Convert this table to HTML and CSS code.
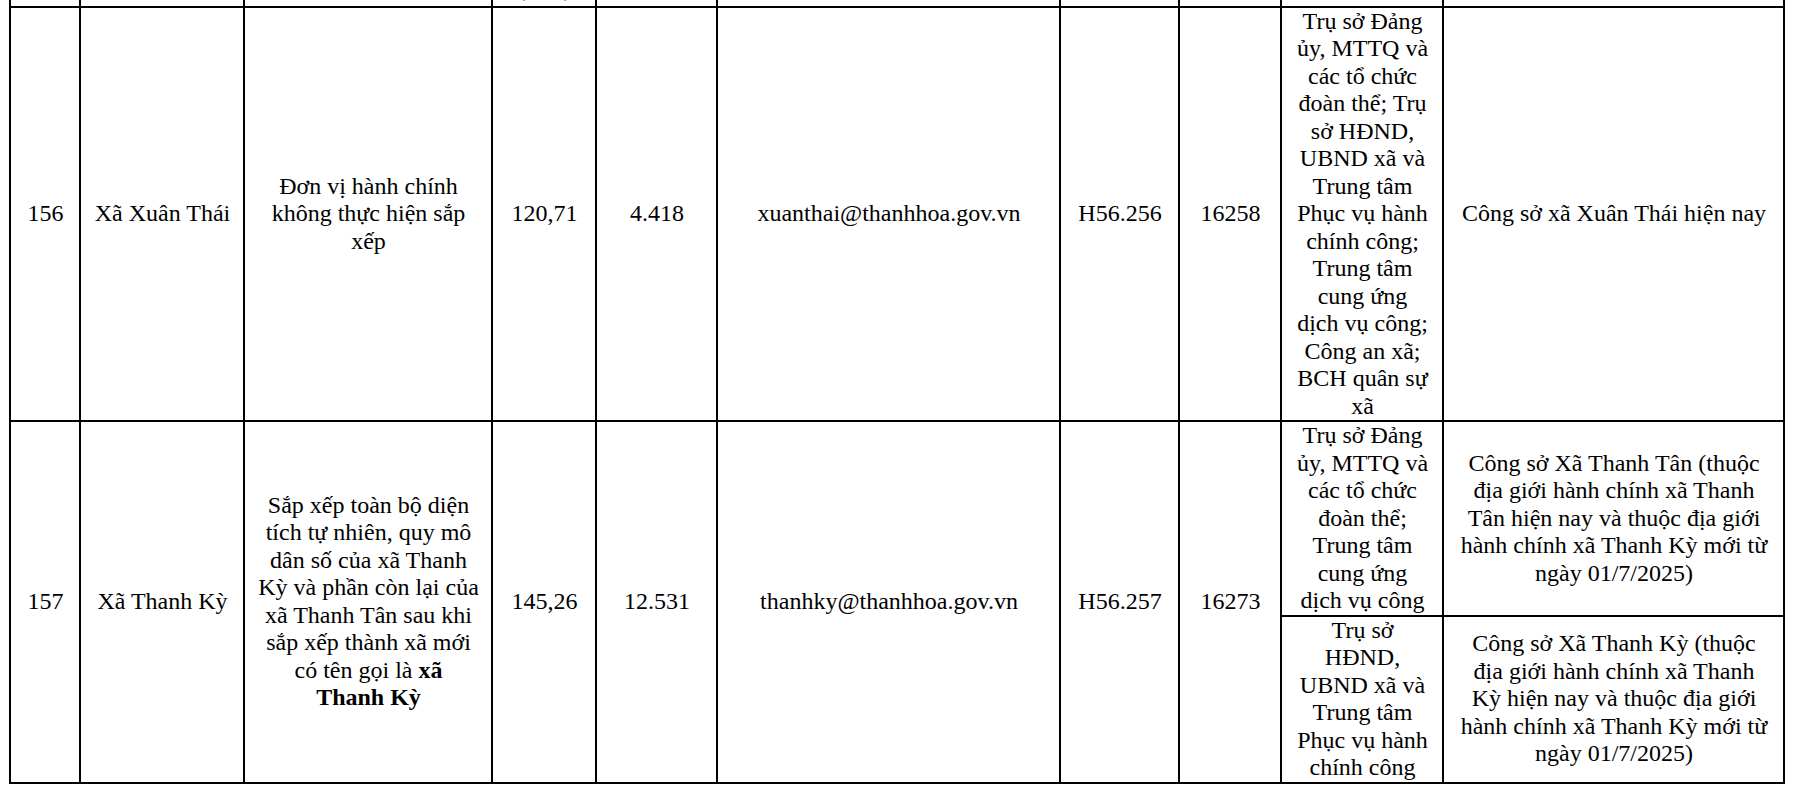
FILE: index.html
```html
<!DOCTYPE html>
<html lang="vi">
<head>
<meta charset="utf-8">
<title>Danh sách đơn vị hành chính cấp xã</title>
<link rel="stylesheet" href="styles.css">
</head>
<body>
<table class="sheet">
  <colgroup>
    <col class="c-stt">
    <col class="c-name">
    <col class="c-basis">
    <col class="c-area">
    <col class="c-pop">
    <col class="c-mail">
    <col class="c-post">
    <col class="c-code">
    <col class="c-office">
    <col class="c-place">
  </colgroup>
  <tr class="head">
    <td></td>
    <td></td>
    <td></td>
    <td>(km<sup>2</sup>)</td>
    <td></td>
    <td></td>
    <td></td>
    <td></td>
    <td></td>
    <td></td>
  </tr>
  <tr>
    <td>156</td>
    <td>Xã Xuân Thái</td>
    <td>Đơn vị hành chính không thực hiện sắp xếp</td>
    <td>120,71</td>
    <td>4.418</td>
    <td>xuanthai@thanhhoa.gov.vn</td>
    <td>H56.256</td>
    <td>16258</td>
    <td>Trụ sở Đảng ủy, MTTQ và các tổ chức đoàn thể; Trụ sở HĐND, UBND xã và Trung tâm Phục vụ hành chính công; Trung tâm cung ứng dịch vụ công; Công an xã; BCH quân sự xã</td>
    <td>Công sở xã Xuân Thái hiện nay</td>
  </tr>
  <tr>
    <td rowspan="2">157</td>
    <td rowspan="2">Xã Thanh Kỳ</td>
    <td rowspan="2">Sắp xếp toàn bộ diện tích tự nhiên, quy mô dân số của xã Thanh Kỳ và phần còn lại của xã Thanh Tân sau khi sắp xếp thành xã mới có tên gọi là <b>xã Thanh Kỳ</b></td>
    <td rowspan="2">145,26</td>
    <td rowspan="2">12.531</td>
    <td rowspan="2">thanhky@thanhhoa.gov.vn</td>
    <td rowspan="2">H56.257</td>
    <td rowspan="2">16273</td>
    <td>Trụ sở Đảng ủy, MTTQ và các tổ chức đoàn thể; Trung tâm cung ứng dịch vụ công</td>
    <td>Công sở Xã Thanh Tân (thuộc địa giới hành chính xã Thanh Tân hiện nay và thuộc địa giới hành chính xã Thanh Kỳ mới từ ngày 01/7/2025)</td>
  </tr>
  <tr>
    <td>Trụ sở HĐND, UBND xã và Trung tâm Phục vụ hành chính công</td>
    <td>Công sở Xã Thanh Kỳ (thuộc địa giới hành chính xã Thanh Kỳ hiện nay và thuộc địa giới hành chính xã Thanh Kỳ mới từ ngày 01/7/2025)</td>
  </tr>
</table>
</body>
</html>
```

FILE: styles.css
```css
html, body {
  margin: 0;
  background: #ffffff;
}

.sheet {
  border-collapse: collapse;
  table-layout: fixed;
  width: 1776px;
  margin: -27px 0 0 9px;
  font-family: "Liberation Serif", "Times New Roman", serif;
  font-size: 24px;
  line-height: 27.5px;
  color: #000000;
}

.sheet td {
  border: 2px solid #000000;
  padding: 0 12px 0 13px;
  text-align: center;
  vertical-align: middle;
}

.sheet .head td {
  vertical-align: bottom;
  padding-bottom: 3px;
}

.sheet sup {
  font-size: 0.65em;
  line-height: 0;
}

.sheet b {
  font-weight: bold;
}

.c-stt { width: 70px; }
.c-name { width: 164px; }
.c-basis { width: 248px; }
.c-area { width: 104px; }
.c-pop { width: 121px; }
.c-mail { width: 343px; }
.c-post { width: 119px; }
.c-code { width: 102px; }
.c-office { width: 162px; }
.c-place { width: 341px; }
```
